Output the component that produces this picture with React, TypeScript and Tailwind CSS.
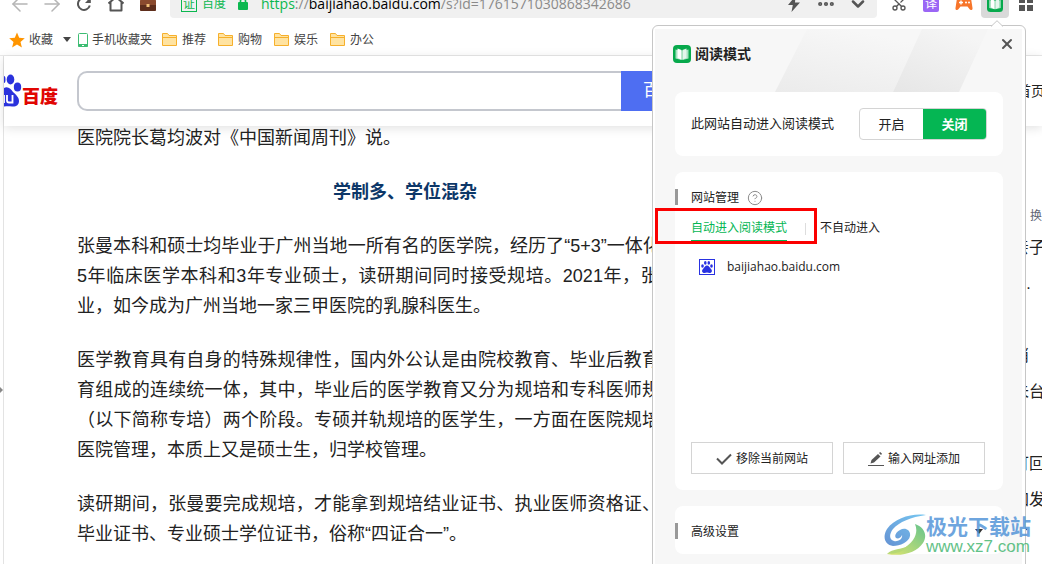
import { useState } from "react";
import {
  ArrowLeft,
  ArrowRight,
  ChevronDown,
  CircleHelp,
  Ellipsis,
  Scissors,
  X,
} from "lucide-react";
import clsx from "clsx";

const bookmarks = ["推荐", "购物", "娱乐", "办公"];

const paragraphs = [
  [
    "张曼本科和硕士均毕业于广州当地一所有名的医学院，经历了“5+3”一体化培养，即",
    "5年临床医学本科和3年专业硕士，读研期间同时接受规培。2021年，张曼顺利毕",
    "业，如今成为广州当地一家三甲医院的乳腺科医生。",
  ],
  [
    "医学教育具有自身的特殊规律性，国内外公认是由院校教育、毕业后教育和继续教",
    "育组成的连续统一体，其中，毕业后的医学教育又分为规培和专科医师规范化培训",
    "（以下简称专培）两个阶段。专硕并轨规培的医学生，一方面在医院规培，并由该",
    "医院管理，本质上又是硕士生，归学校管理。",
  ],
  [
    "读研期间，张曼要完成规培，才能拿到规培结业证书、执业医师资格证、研究生的",
    "毕业证书、专业硕士学位证书，俗称“四证合一”。",
  ],
];

const sideLines = ["亲子", "\u00a0\u00a0\u00a0.", "", "消", "未台", "", "可回", "加发", "了"];

function BookIcon({ className }: { className?: string }) {
  return (
    <svg viewBox="0 0 18 18" className={className} aria-hidden="true">
      <rect width="18" height="18" rx="4" fill="#07a94c" />
      <path d="M2.5 4.5 8.5 6v9l-6-1.4z" fill="#a9e2c2" />
      <path d="M15.5 4.5 9.5 6v9l6-1.4z" fill="#a9e2c2" />
      <path d="M4.5 3.5 8.6 5v9.8L4.5 13z" fill="#fff" />
      <path d="M13.5 3.5 9.4 5v9.8l4.1-1.8z" fill="#e4f6ec" />
    </svg>
  );
}

function ReloadIcon() {
  return (
    <svg viewBox="0 0 16 16" className="size-4" aria-hidden="true">
      <path
        d="M13.8 9.5A6 6 0 1 1 12.3 3.7"
        fill="none"
        stroke="#555"
        strokeWidth="2"
      />
      <path d="M14.8 1v6H9z" fill="#555" />
    </svg>
  );
}

function HomeIcon() {
  return (
    <svg viewBox="0 0 16 16" className="size-4" aria-hidden="true">
      <path
        d="M.5 7.500 8 1l7.500 6.500M2.500 6v8.500h11V6"
        fill="none"
        stroke="#555"
        strokeWidth="2"
        strokeLinejoin="round"
      />
    </svg>
  );
}

function BriefcaseIcon() {
  return (
    <svg viewBox="0 0 16 16" className="size-4" aria-hidden="true">
      <path d="M5 4V1.5h6V4" fill="none" stroke="#6d3a24" strokeWidth="1.5" />
      <rect y="3.5" width="16" height="11.5" rx="1.5" fill="#8a4a2e" />
      <path d="M0 9h16v4.5a1.5 1.5 0 0 1-1.5 1.5h-13A1.5 1.5 0 0 1 0 13.5z" fill="#5e2e1c" />
      <rect x="6.5" y="8" width="3" height="3" fill="#f2c078" />
    </svg>
  );
}

function LockIcon() {
  return (
    <svg viewBox="0 0 10 14" className="h-3.5 w-2.5" aria-hidden="true">
      <path d="M2.5 6V4a2.5 2.5 0 0 1 5 0v2" fill="none" stroke="#0bb84f" strokeWidth="1.6" />
      <rect y="5" width="10" height="8" rx="1" fill="#0bb84f" />
    </svg>
  );
}

function BoltIcon() {
  return (
    <svg viewBox="0 0 14 16" className="h-4 w-3.5" aria-hidden="true">
      <path d="M8.5 0 1 9h4.8L4.5 16 13 6.5H8z" fill="#555" />
    </svg>
  );
}

function GamepadIcon() {
  return (
    <svg viewBox="0 0 18 16" className="h-4 w-[18px]" aria-hidden="true">
      <path
        d="M4 2h10c1.300 0 2 1 2.300 2.300L17.500 12c.3 2-1.800 2.800-2.900 1.300L12.500 10.500h-7l-2.100 2.800C2.300 14.800.2 14 .5 12L1.700 4.300C2 3 2.700 2 4 2z"
        fill="#f7752a"
      />
      <path d="M4 6.5h4M6 4.5v4" stroke="#fff" strokeWidth="1.4" />
      <circle cx="11" cy="6.5" r="1" fill="#fff" />
      <circle cx="14" cy="6.5" r="1" fill="#fff" />
    </svg>
  );
}

function GridIcon() {
  return (
    <svg viewBox="0 0 14 14" className="size-3.5" aria-hidden="true">
      <path d="M0 0h6v6H0zM8 0h6v6H8zM0 8h6v6H0zM8 8h6v6H8z" fill="#555" />
    </svg>
  );
}

function StarIcon() {
  return (
    <svg viewBox="0 0 16 16" className="size-4" aria-hidden="true">
      <path d="m8 .5 2.200 5.300 5.600.4-4.300 3.700 1.400 5.600L8 12.500l-4.900 3 1.400-5.600L.2 6.200l5.600-.4z" fill="#ff9500" />
    </svg>
  );
}

function PhoneIcon() {
  return (
    <svg viewBox="0 0 10 14" className="h-3.5 w-2.5" aria-hidden="true">
      <rect x=".5" y=".5" width="9" height="13" rx="1" fill="#fff" stroke="#3dbd73" />
      <path d="M0 11h10v2a1 1 0 0 1-1 1H1a1 1 0 0 1-1-1z" fill="#3dbd73" />
      <path d="M4 12.5h2" stroke="#fff" />
    </svg>
  );
}

function FolderIcon() {
  return (
    <svg viewBox="0 0 15 13" className="h-[13px] w-[15px]" aria-hidden="true">
      <path d="M.5.5h5l1.500 2h7.500v10H.5z" fill="#ffe3a1" stroke="#f6b02c" />
      <path d="M.5 4.5h14" stroke="#f6b02c" />
    </svg>
  );
}

function Caret({ className }: { className?: string }) {
  return (
    <svg viewBox="0 0 8 5" className={className} aria-hidden="true">
      <path d="M0 0h8L4 5z" fill="currentColor" />
    </svg>
  );
}

function BaiduPaw() {
  return (
    <svg viewBox="0 0 18 34" className="h-[34px] w-[18px]" aria-hidden="true">
      <ellipse cx="0" cy="5.5" rx="1.5" ry="3.5" fill="#2a32dc" />
      <ellipse cx="6.5" cy="5.5" rx="3.8" ry="5" fill="#2a32dc" />
      <ellipse cx="13.5" cy="13" rx="3.7" ry="4.5" fill="#2a32dc" />
      <path d="M0 14c4-2 7 1 9 4 3 3 6 5 6 9 0 4-3 6-7 5.5-3-.5-5-.5-8 0z" fill="#2a32dc" />
      <path d="M0 21v8M3 21v5.500q0 2 2 2h3.500V21" fill="none" stroke="#fff" strokeWidth="1.8" />
    </svg>
  );
}

function PawFavicon() {
  return (
    <svg viewBox="0 0 16 16" className="size-4" aria-hidden="true">
      <rect x=".5" y=".5" width="15" height="15" fill="#fff" stroke="#2932e1" />
      <ellipse cx="3.5" cy="7" rx="1.3" ry="1.7" fill="#2932e1" />
      <ellipse cx="6.3" cy="3.9" rx="1.3" ry="1.8" fill="#2932e1" />
      <ellipse cx="9.8" cy="3.9" rx="1.3" ry="1.8" fill="#2932e1" />
      <ellipse cx="12.5" cy="7" rx="1.3" ry="1.7" fill="#2932e1" />
      <path d="M8 6.5c2 0 2.500 2 4 3.500 2 2 .5 4-1.500 4-1 0-1.500-.4-2.500-.4s-1.500.4-2.500.4c-2 0-3.500-2-1.500-4C5.500 8.500 6 6.500 8 6.500z" fill="#2932e1" />
    </svg>
  );
}

function Toolbar() {
  return (
    <div className="flex h-[18px] items-end overflow-hidden">
      <div className="flex h-7 flex-1 items-center">
        <div className="flex w-[170px] shrink-0 items-center gap-2 pl-2">
          <button type="button" aria-label="后退" className="flex w-6 justify-center">
            <ArrowLeft className="size-6 text-[#b5b5b5]" strokeWidth={1.5} />
          </button>
          <button type="button" aria-label="前进" className="flex w-6 justify-center">
            <ArrowRight className="size-6 text-[#b5b5b5]" strokeWidth={1.5} />
          </button>
          <button type="button" aria-label="刷新" className="flex w-6 justify-center">
            <ReloadIcon />
          </button>
          <button type="button" aria-label="主页" className="flex w-6 justify-center">
            <HomeIcon />
          </button>
          <button type="button" aria-label="工具箱" className="flex w-6 justify-center">
            <BriefcaseIcon />
          </button>
        </div>

        <div className="flex h-7 flex-1 items-center rounded-b bg-[#f0f0f0] pl-[11px] pr-[9px]">
          <span className="flex size-4 items-center justify-center border border-[#0bb84f] text-xs leading-none text-[#0bb84f]">
            证
          </span>
          <span className="ml-[5px] text-xs text-[#0bb84f]">百度</span>
          <span className="ml-3">
            <LockIcon />
          </span>
          <span className="ml-[13px] flex-1 whitespace-nowrap font-['Open_Sans','Noto_Sans',sans-serif] text-sm text-[#8a8a8a]">
            <span className="text-[#0bb84f]">https</span>://
            <span className="text-black">baijiahao.baidu.com</span>
            /s?id=1761571030868342686
          </span>
          <div className="flex items-center gap-3">
            <button type="button" aria-label="极速模式" className="flex w-5 justify-center">
              <BoltIcon />
            </button>
            <button type="button" aria-label="更多">
              <Ellipsis className="size-5 text-[#555]" strokeWidth={3} />
            </button>
            <button type="button" aria-label="展开">
              <ChevronDown className="size-5 text-[#555]" strokeWidth={3} />
            </button>
          </div>
        </div>

        <div className="flex h-7 items-center pl-3.5 pr-[9px]">
          <button type="button" aria-label="截图">
            <Scissors className="size-4 -rotate-90 text-[#555]" />
          </button>
          <button
            type="button"
            className="ml-4 size-4 rounded-xs bg-[#9b66f5] text-xs leading-none text-white"
          >
            译
          </button>
          <button type="button" aria-label="游戏" className="ml-4">
            <GamepadIcon />
          </button>
          <button
            type="button"
            aria-label="阅读模式"
            className="ml-2 flex h-7 w-7 items-center justify-center rounded-b bg-[#d9d9d9]"
          >
            <BookIcon className="size-4" />
          </button>
          <button type="button" aria-label="扩展" className="ml-2.5">
            <GridIcon />
          </button>
        </div>
      </div>
    </div>
  );
}

function BookmarkBar() {
  return (
    <nav className="flex h-[38px] items-center border-b border-[#e9e9e9] pl-[9px] pt-1.5 text-xs text-[#444]">
      <a href="#favorites" className="flex items-center gap-1">
        <StarIcon />
        收藏
      </a>
      <Caret className="ml-2.5 h-[5px] w-2 text-[#444]" />
      <a href="#mobile" className="ml-[7px] flex items-center gap-1">
        <PhoneIcon />
        手机收藏夹
      </a>
      <div className="ml-2.5 flex gap-3">
        {bookmarks.map((name) => (
          <a key={name} href="#folder" className="flex items-center gap-[5px]">
            <FolderIcon />
            {name}
          </a>
        ))}
      </div>
    </nav>
  );
}

function SiteHeader() {
  return (
    <header className="flex h-[70px] items-center shadow-[0_2px_10px_rgba(0,0,0,0.12)]">
      <a href="#baidu" aria-label="百度" className="flex w-[73px] shrink-0 items-center">
        <BaiduPaw />
        <span className="pt-3 text-lg font-black leading-none text-[#e10602]">百度</span>
      </a>
      <form className="mr-[284px] flex h-10 flex-1" onSubmit={(e) => e.preventDefault()}>
        <input
          type="text"
          aria-label="搜索"
          className="h-10 min-w-0 flex-1 rounded-l-[10px] border-2 border-r-0 border-[#c4c7ce] px-3 outline-none"
        />
        <button type="submit" className="w-28 rounded-r-[10px] bg-[#4e6ef2] text-[17px] text-white">
          百度一下
        </button>
      </form>
      <a href="#home" className="w-[25px] overflow-hidden whitespace-nowrap text-sm text-[#222]">
        首页
      </a>
    </header>
  );
}

function Article() {
  return (
    <article className="min-w-0 flex-1 overflow-hidden whitespace-nowrap pl-[73px] text-lg leading-[30px] text-[#222]">
      <div className="-mt-[3px] w-[656px]">
        <p>医院院长葛均波对《中国新闻周刊》说。</p>
        <h3 className="my-6 text-center font-bold text-[#0d3768]">
          学制多、学位混杂
        </h3>
        {paragraphs.map((lines) => (
          <p key={lines[0]} className="mb-6">
            {lines.map((line, index) => (
              <span
                key={line}
                className={clsx(
                  "block",
                  index < lines.length - 1 && "text-justify [text-align-last:justify]"
                )}
              >
                {line}
              </span>
            ))}
          </p>
        ))}
      </div>
    </article>
  );
}

function SectionTitle({ children }: { children: React.ReactNode }) {
  return (
    <div className="flex h-4 items-center border-l-[3px] border-[#999] pl-[13px] pt-0.5 text-xs text-[#222]">
      {children}
    </div>
  );
}

function ReaderPanel() {
  const [auto, setAuto] = useState(false);
  const [tab, setTab] = useState("auto");

  return (
    <section
      aria-label="阅读模式"
      className="absolute right-4 top-[25px] w-[374px] rounded-md border border-[#c6c6c6] bg-white pl-0.5 pr-[3px] pt-[3px] text-[#222]"
    >
      {/* pointer towards the toolbar button */}
      <svg viewBox="0 0 12 7" className="absolute -top-[6px] right-[22px] h-[7px] w-3" aria-hidden="true">
        <path d="M0 6.5 6 .7l6 5.800V7H0z" fill="#fff" />
        <path d="M0 6.5 6 .7l6 5.800" fill="none" stroke="#c6c6c6" />
      </svg>

      <div className="relative bg-[#f7f7f7] pb-10 pl-5 pr-[19px]">
        <svg viewBox="0 0 247 63" className="absolute right-0 top-0 h-[63px] w-[247px]" aria-hidden="true">
          <defs>
            <linearGradient id="beamA" x1="0" y1="1" x2=".5" y2="0">
              <stop offset="0" stopColor="#ebebeb" />
              <stop offset="1" stopColor="#f7f7f7" />
            </linearGradient>
            <linearGradient id="beamB" x1="0" y1="1" x2=".6" y2="0">
              <stop offset="0" stopColor="#e6e6e6" />
              <stop offset="1" stopColor="#f5f5f5" />
            </linearGradient>
          </defs>
          <path d="M0 63 32 0h115l-29 63z" fill="url(#beamA)" />
          <path d="M118 63 147 0h66l-29 63z" fill="url(#beamB)" />
        </svg>

        <div className="relative flex h-[63px] items-start justify-between">
          <h2 className="-ml-0.5 flex items-center gap-1 pt-4 text-sm leading-[18px] font-bold">
            <BookIcon className="size-[18px]" />
            阅读模式
          </h2>
          <button type="button" aria-label="关闭面板" className="-mr-3 pt-[7px]">
            <X className="size-4 text-[#555]" strokeWidth={3} />
          </button>
        </div>

        <div className="relative flex h-16 items-center justify-between rounded-lg bg-white px-4 text-[13px]">
          此网站自动进入阅读模式
          <div className="flex h-8 w-32 overflow-hidden rounded border border-[#d4d4d4]">
            <button
              type="button"
              onClick={() => setAuto(true)}
              className={clsx("flex-1 pt-0.5", auto && "bg-[#05b653] font-bold text-white")}
            >
              开启
            </button>
            <button
              type="button"
              onClick={() => setAuto(false)}
              className={clsx("flex-1 pt-0.5", !auto && "bg-[#05b653] font-bold text-white")}
            >
              关闭
            </button>
          </div>
        </div>

        <div className="mt-4 flex h-[318px] flex-col rounded-lg bg-white pb-4 pt-[17px]">
          <SectionTitle>
            网站管理
            <CircleHelp className="ml-2 size-4 text-[#8c8c8c]" strokeWidth={1.5} />
          </SectionTitle>

          <div className="relative mt-[11px] flex h-[26px] items-center px-4 text-xs">
            <button
              type="button"
              onClick={() => setTab("auto")}
              className={clsx(
                "h-[26px] border-b-2",
                tab === "auto" ? "border-[#05b653] text-[#05b653]" : "border-transparent"
              )}
            >
              自动进入阅读模式
            </button>
            <span className="ml-[18px] mr-3.5 h-3 w-px bg-[#ddd]" />
            <button
              type="button"
              onClick={() => setTab("manual")}
              className={clsx(
                "h-[26px] border-b-2",
                tab === "manual" ? "border-[#05b653] text-[#05b653]" : "border-transparent"
              )}
            >
              不自动进入
            </button>
            <div className="pointer-events-none absolute -left-5 -top-2 h-9 w-[162px] border-[3px] border-[#fb0000]" />
          </div>

          <ul className="mt-[13px] flex-1 px-6">
            <li className="flex h-6 items-center gap-3 font-['Open_Sans','Noto_Sans',sans-serif] text-xs">
              <PawFavicon />
              baijiahao.baidu.com
            </li>
          </ul>

          <div className="flex gap-2.5 px-4 text-xs">
            <button type="button" className="flex h-8 w-[142px] items-center justify-center gap-1 border border-[#d4d4d4] pt-0.5">
              <svg viewBox="0 0 16 12" className="h-3 w-4" aria-hidden="true">
                <path d="m1 5.500 5 5L15 1.500" fill="none" stroke="#555" strokeWidth="2" />
              </svg>
              移除当前网站
            </button>
            <button type="button" className="flex h-8 w-[142px] items-center justify-center gap-1 border border-[#d4d4d4] pt-0.5">
              <svg viewBox="0 0 16 14" className="h-3.5 w-4" aria-hidden="true">
                <path d="M0 13.500h16" stroke="#555" />
                <path d="m2.500 11.500 1-3.500 6.500-6 2.500 2.500L6 10.500z" fill="#555" />
                <path d="m11 1 1.200-1 1.800 1.800L13 3z" fill="#555" />
              </svg>
              输入网址添加
            </button>
          </div>
        </div>

        <button
          type="button"
          aria-expanded="false"
          className="mt-4 flex h-12 w-full items-center justify-between rounded-lg bg-white pr-5 pt-0.5"
        >
          <SectionTitle>高级设置</SectionTitle>
          <Caret className="h-[5px] w-2 text-[#333]" />
        </button>
      </div>
    </section>
  );
}

function Watermark() {
  return (
    <div className="pointer-events-none absolute bottom-[9px] right-[11px] flex items-center opacity-80">
      <svg viewBox="0 0 42 41" className="h-[41px] w-[42px]" aria-hidden="true">
        <defs>
          <linearGradient id="swirlBlue" x1="1" y1="0" x2="0" y2="1">
            <stop offset="0" stopColor="#55b9ee" />
            <stop offset="1" stopColor="#3f78c9" />
          </linearGradient>
          <linearGradient id="swirlGreen" x1="1" y1="0" x2="0" y2="1">
            <stop offset="0" stopColor="#3fb572" />
            <stop offset="1" stopColor="#d9e04a" />
          </linearGradient>
        </defs>
        <path
          d="M42 1C28-1 11 4 3 15c-5 8-2 16 6 17 7 0 16-4 17-10 1-6-5-9-10-6-4 2-6 6-4 8 2 1 5 0 6-3 1 4-4 7-8 6-5-1-5-7-1-12C15 8 27 3 42 1z"
          fill="url(#swirlBlue)"
        />
        <path d="M31 10c9 3 13 11 8 19C33 38 19 43 3 40c12-2 21-7 26-14 4-6 4-11 2-16z" fill="url(#swirlGreen)" />
        <path d="M3 40c6-6 14-4 21-8-3 5-12 8-21 8z" fill="#a5cf52" />
      </svg>
      <div className="flex flex-col whitespace-nowrap">
        <span className="text-[21px] leading-6 font-bold text-[#4a8fd6]">极光下载站</span>
        <span className="text-[17px] leading-4 text-[#3cb36b]">www.xz7.com</span>
      </div>
    </div>
  );
}

export default function App() {
  return (
    <div className="relative flex h-screen flex-col overflow-hidden bg-white font-['Liberation_Sans','Noto_Sans_CJK_SC',sans-serif]">
      <Toolbar />
      <BookmarkBar />

      <div className="flex min-h-0 flex-1">
        <div className="flex w-1 shrink-0 items-center border-r border-[#e3e3e3]">
          <svg viewBox="0 0 3 6" className="mt-40 h-1.5 w-[3px]" aria-hidden="true">
            <path d="M0 0l3 3-3 3z" fill="#888" />
          </svg>
        </div>
        <main className="min-w-0 flex-1">
          <SiteHeader />
          <div className="flex">
            <Article />
            <aside className="w-[29px] shrink-0 overflow-hidden whitespace-nowrap pt-[78px] text-base text-[#222]">
              <a href="#refresh" className="block pl-[17px] text-xs leading-6 text-[#626675]">
                换
              </a>
              <ul className="pt-0.5">
                {sideLines.map((line, index) => (
                  <li key={index} className="h-9 leading-9">
                    {line}
                  </li>
                ))}
              </ul>
            </aside>
          </div>
        </main>
      </div>

      <ReaderPanel />
      <Watermark />
    </div>
  );
}
